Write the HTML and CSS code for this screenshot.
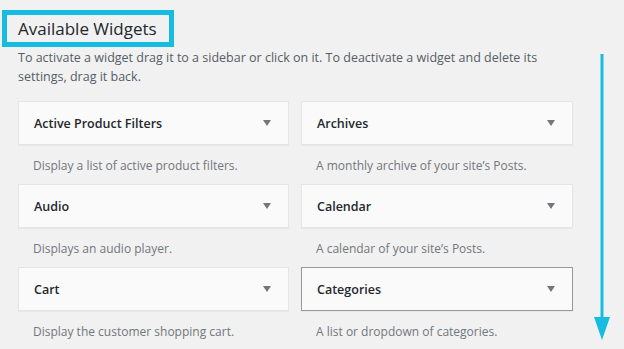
FILE: index.html
```html
<!DOCTYPE html>
<html>
<head>
  <title>Available Widgets</title>
  <link rel="stylesheet" href="styles.css">
</head>
<body>

  <div class="page">
    <!-- Left: widget list -->
    <div class="widgets">
      <div class="heading-box">
        <h2>Available Widgets</h2>
      </div>
      <p class="intro">To activate a widget drag it to a sidebar or click on it. To deactivate a widget and delete its settings, drag it back.</p>

      <div class="widget-grid">
        <div class="widget">
          <div class="widget-top"><span>Active Product Filters</span><span class="caret"></span></div>
          <div class="widget-desc">Display a list of active product filters.</div>
        </div>
        <div class="widget">
          <div class="widget-top"><span>Archives</span><span class="caret"></span></div>
          <div class="widget-desc">A monthly archive of your site’s Posts.</div>
        </div>
        <div class="widget">
          <div class="widget-top"><span>Audio</span><span class="caret"></span></div>
          <div class="widget-desc">Displays an audio player.</div>
        </div>
        <div class="widget">
          <div class="widget-top"><span>Calendar</span><span class="caret"></span></div>
          <div class="widget-desc">A calendar of your site’s Posts.</div>
        </div>
        <div class="widget">
          <div class="widget-top"><span>Cart</span><span class="caret"></span></div>
          <div class="widget-desc">Display the customer shopping cart.</div>
        </div>
        <div class="widget">
          <div class="widget-top hover"><span>Categories</span><span class="caret"></span></div>
          <div class="widget-desc">A list or dropdown of categories.</div>
        </div>
      </div>
    </div>

    <!-- Right: scroll arrow -->
    <div class="scroll-arrow">
      <svg width="16" height="287" viewBox="0 0 16 287">
        <rect x="6.5" y="0" width="3" height="266" fill="#16bde0"/>
        <polygon points="0,263 16,263 8,286" fill="#16bde0"/>
      </svg>
    </div>
  </div>

</body>
</html>
```

FILE: styles.css
```css
body {
  margin: 0;
  background-color: #f1f1f1;
  font-family: "Segoe UI", "Open Sans", sans-serif;
  color: #23282d;
}

/* Page layout */
.page {
  display: flex;
  height: 349px;
}

.widgets {
  width: 573px;
  padding: 10px 0 0 2px;
}

/* Heading with blue highlight */
.heading-box {
  display: inline-block;
  border: 5px solid #16bde0;
  padding: 0 12px 0 11px;
}

.heading-box h2 {
  margin: 0;
  font-size: 17px;
  font-weight: 400;
  line-height: 27px;
}

.intro {
  margin: 1px 0 0 16px;
  font-size: 12.5px;
  line-height: 19px;
  color: #555d66;
  width: 540px;
}

/* Widget grid */
.widget-grid {
  display: grid;
  grid-template-columns: 271px 272px;
  column-gap: 12px;
  margin: 15px 0 0 16px;
}

.widget {
  height: 83px;
}

.widget-top {
  display: flex;
  justify-content: space-between;
  align-items: center;
  height: 42px;
  padding: 0 17px 0 15px;
  background-color: #fafafa;
  border: 1px solid #e5e5e5;
  box-shadow: 0 1px 1px rgba(0, 0, 0, 0.04);
  font-size: 12.5px;
  font-weight: 600;
}

.widget-top.hover {
  border-color: #999;
}

.caret {
  width: 0;
  height: 0;
  border-left: 4px solid transparent;
  border-right: 4px solid transparent;
  border-top: 6px solid #72777c;
}

.widget-desc {
  padding: 11px 0 0 15px;
  font-size: 12px;
  line-height: 19px;
  color: #72777c;
}

/* Scroll arrow */
.scroll-arrow {
  padding: 54px 0 0 19px;
}

.scroll-arrow svg {
  display: block;
}
```
